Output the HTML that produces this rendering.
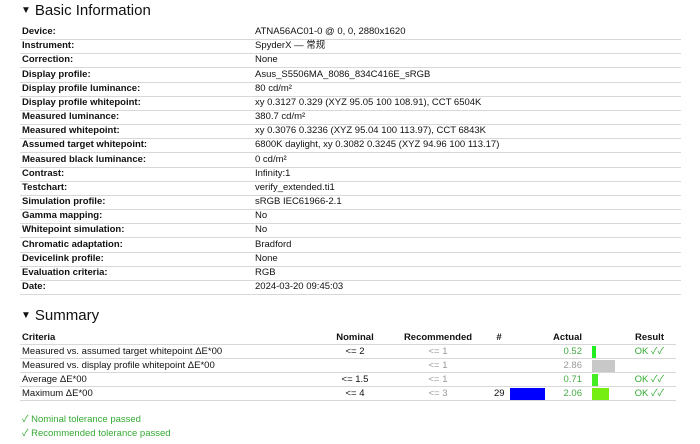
<!DOCTYPE html>
<html><head><meta charset="utf-8"><style>
body{margin:0;width:700px;height:444px;background:#fff;font-family:"Liberation Sans","Noto Sans CJK SC",sans-serif;font-size:9.5px;color:#111;position:relative;overflow:hidden}
.h{position:absolute;left:21px;font-size:15px;color:#111}
.h small{font-size:10px;vertical-align:2px;margin-right:4px}
.r{position:absolute;left:20px;width:661px;height:14px;border-bottom:1px solid #d8d8d8;line-height:14px;white-space:nowrap}
.r b{position:absolute;left:2px}
.r span{position:absolute;left:235px}
.s{position:absolute;left:20px;width:656px;height:13px;border-bottom:1px solid #d8d8d8;line-height:13px;white-space:nowrap}
.s i{font-style:normal;position:absolute}
.c{text-align:center;width:80px}
.g{color:#4a4}
.gr{color:#999}
.ok{color:#3a3}
</style></head><body>
<div class="h" style="top:2px"><small>▼</small>Basic Information</div>
<div class="r" style="top:25px"><b>Device:</b><span>ATNA56AC01-0 @ 0, 0, 2880x1620</span></div>
<div class="r" style="top:39.2px"><b>Instrument:</b><span>SpyderX — 常规</span></div>
<div class="r" style="top:53.3px"><b>Correction:</b><span>None</span></div>
<div class="r" style="top:67.5px"><b>Display profile:</b><span>Asus_S5506MA_8086_834C416E_sRGB</span></div>
<div class="r" style="top:81.7px"><b>Display profile luminance:</b><span>80 cd/m²</span></div>
<div class="r" style="top:95.9px"><b>Display profile whitepoint:</b><span>xy 0.3127 0.329 (XYZ 95.05 100 108.91), CCT 6504K</span></div>
<div class="r" style="top:110px"><b>Measured luminance:</b><span>380.7 cd/m²</span></div>
<div class="r" style="top:124.2px"><b>Measured whitepoint:</b><span>xy 0.3076 0.3236 (XYZ 95.04 100 113.97), CCT 6843K</span></div>
<div class="r" style="top:138.4px"><b>Assumed target whitepoint:</b><span>6800K daylight, xy 0.3082 0.3245 (XYZ 94.96 100 113.17)</span></div>
<div class="r" style="top:152.5px"><b>Measured black luminance:</b><span>0 cd/m²</span></div>
<div class="r" style="top:166.7px"><b>Contrast:</b><span>Infinity:1</span></div>
<div class="r" style="top:180.9px"><b>Testchart:</b><span>verify_extended.ti1</span></div>
<div class="r" style="top:195px"><b>Simulation profile:</b><span>sRGB IEC61966-2.1</span></div>
<div class="r" style="top:209.2px"><b>Gamma mapping:</b><span>No</span></div>
<div class="r" style="top:223.4px"><b>Whitepoint simulation:</b><span>No</span></div>
<div class="r" style="top:237.5px"><b>Chromatic adaptation:</b><span>Bradford</span></div>
<div class="r" style="top:251.7px"><b>Devicelink profile:</b><span>None</span></div>
<div class="r" style="top:265.9px"><b>Evaluation criteria:</b><span>RGB</span></div>
<div class="r" style="top:280px"><b>Date:</b><span>2024-03-20 09:45:03</span></div>

<div class="h" style="top:307px"><small>▼</small>Summary</div>
<div class="s" style="top:331px;font-weight:bold"><i style="left:2px">Criteria</i><i class="c" style="left:295px">Nominal</i><i class="c" style="left:378px">Recommended</i><i class="c" style="left:439px">#</i><i style="right:94px">Actual</i><i style="right:12px">Result</i></div>
<div class="s" style="top:345px"><i style="left:2px">Measured vs. assumed target whitepoint ΔE*00</i><i class="c" style="left:295px">&lt;= 2</i><i class="c gr" style="left:378px">&lt;= 1</i><i class="g" style="right:94px">0.52</i><i style="left:572px;top:1px;width:4px;height:12px;background:#2e2"></i><i class="ok" style="right:12px">OK ✓✓</i></div>
<div class="s" style="top:359px"><i style="left:2px">Measured vs. display profile whitepoint ΔE*00</i><i class="c gr" style="left:378px">&lt;= 1</i><i class="gr" style="right:94px">2.86</i><i style="left:572px;top:1px;width:23px;height:12px;background:#c8c8c8"></i></div>
<div class="s" style="top:373px"><i style="left:2px">Average ΔE*00</i><i class="c" style="left:295px">&lt;= 1.5</i><i class="c gr" style="left:378px">&lt;= 1</i><i class="g" style="right:94px">0.71</i><i style="left:572px;top:1px;width:6px;height:12px;background:#4e2"></i><i class="ok" style="right:12px">OK ✓✓</i></div>
<div class="s" style="top:387px"><i style="left:2px">Maximum ΔE*00</i><i class="c" style="left:295px">&lt;= 4</i><i class="c gr" style="left:378px">&lt;= 3</i><i style="left:474px">29</i><i style="left:490px;top:1px;width:35px;height:12px;background:#00f"></i><i class="g" style="right:94px">2.06</i><i style="left:572px;top:1px;width:17px;height:12px;background:#7e1"></i><i class="ok" style="right:12px">OK ✓✓</i></div>
<div class="ok" style="position:absolute;left:22px;top:411px">✓ Nominal tolerance passed</div>
<div class="ok" style="position:absolute;left:22px;top:425px">✓ Recommended tolerance passed</div>
</body></html>
